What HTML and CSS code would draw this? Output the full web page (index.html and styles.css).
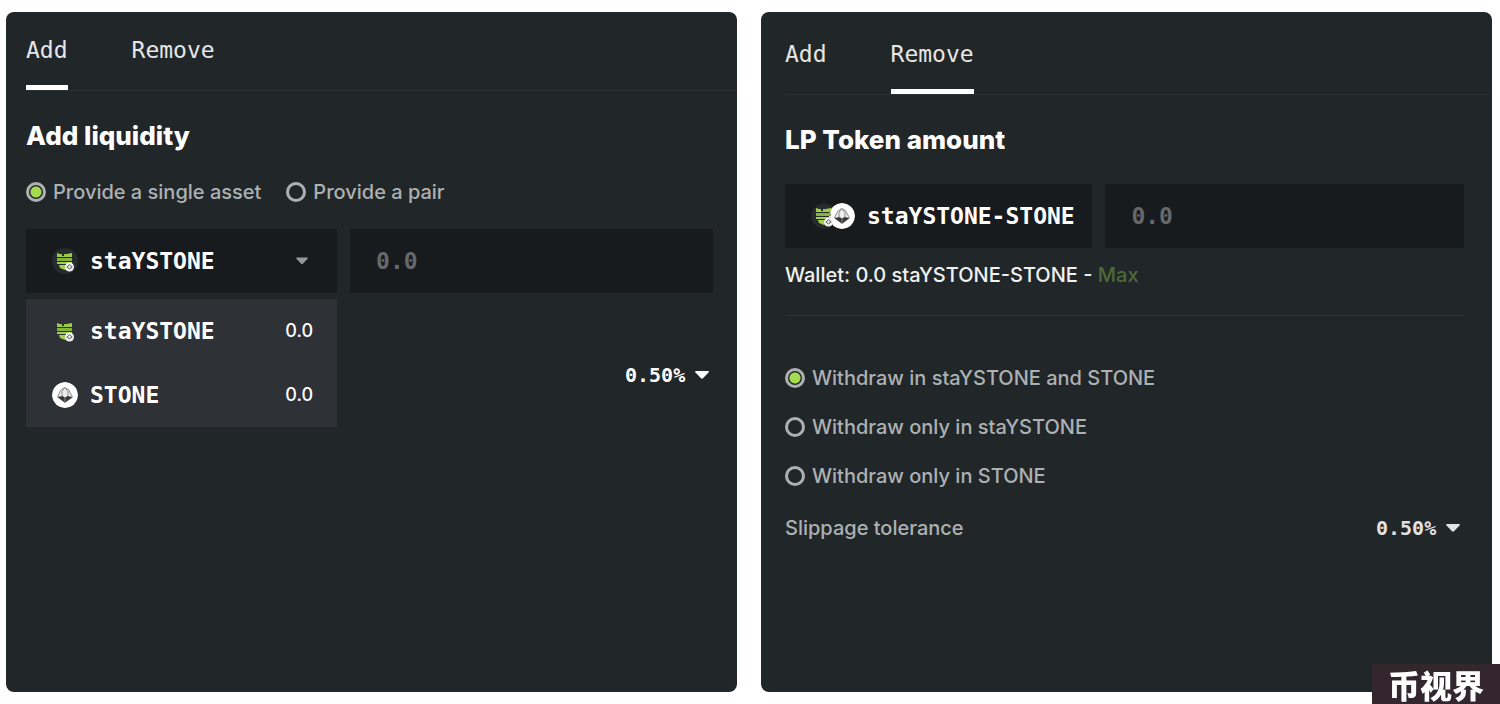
FILE: index.html
```
<!DOCTYPE html>
<html lang="en">
<head>
    <meta charset="UTF-8">
    <meta name="viewport" content="width=device-width, initial-scale=1.0">
    <title>Liquidity</title>
    <link rel="stylesheet" href="styles.css">
</head>
<body>
    <svg class="sprite" aria-hidden="true">
        <symbol id="stone" viewBox="0 0 26 26">
            <circle cx="13" cy="13" r="13" fill="#fff"/>
            <path d="M12.5 5.5L16.5 7.5L20.5 15L13 20.5L5.5 15L8.5 8.5Z" fill="#eee" stroke="#8a8a8a" stroke-width="1"/>
            <path d="M5.5 15L10.5 14L13 15.5L15.5 14L20.5 15L13 20.5Z" fill="#36383a"/>
            <path d="M12.5 5.5L10 9.5V14M12.5 5.5L16 9.5V14M13 15.5V20.5" fill="none" stroke="#8a8a8a" stroke-width="1"/>
        </symbol>
        <symbol id="staystone" viewBox="0 0 26 26">
            <path d="M5 5L8 6H10V8H12V6H15L17 5.5L20 5V9H5Z" fill="#9ccb48"/>
            <path d="M5 10H20V13H5Z" fill="#86b33b"/>
            <path d="M5 14H20V16H5Z" fill="#a3d04f"/>
            <path d="M7 17H19V19L13 22L8 20Z" fill="#a3d04f"/>
            <circle cx="17.5" cy="19" r="4.5" fill="#f4f4f4"/>
            <path d="M14.800 19L17.500 16.500L20.200 19L17.500 21Z" fill="#ddd" stroke="#666" stroke-width="1"/>
        </symbol>
        <symbol id="caret" viewBox="0 0 14 8">
            <path d="M1 0H13Q14.5 0 13.5 1.5L8 7.3Q7 8.2 6 7.3L.5 1.5Q-.5 0 1 0Z" fill="currentColor"/>
        </symbol>
    </svg>

    <main class="panels">
        <section class="panel panel-add">
            <nav class="tabs">
                <a class="tab active" href="#add">Add</a>
                <a class="tab" href="#remove">Remove</a>
            </nav>
            <form class="content">
                <h2 class="title">Add liquidity</h2>
                <div class="modes">
                    <label class="option"><input type="radio" name="mode" checked>Provide a single asset</label>
                    <label class="option"><input type="radio" name="mode">Provide a pair</label>
                </div>
                <div class="fields">
                    <div class="dropdown">
                        <button class="token" type="button" aria-haspopup="listbox" aria-expanded="true">
                            <svg class="coin coin-dark"><use href="#staystone"/></svg>
                            <span>staYSTONE</span>
                            <svg class="caret caret-muted"><use href="#caret"/></svg>
                        </button>
                        <div class="menu">
                            <button class="menu-item" type="button">
                                <svg class="coin"><use href="#staystone"/></svg>
                                <span>staYSTONE</span>
                                <span class="balance">0.0</span>
                            </button>
                            <button class="menu-item" type="button">
                                <svg class="coin"><use href="#stone"/></svg>
                                <span>STONE</span>
                                <span class="balance">0.0</span>
                            </button>
                        </div>
                    </div>
                    <input class="amount" type="text" placeholder="0.0" aria-label="Amount">
                </div>
                <div class="slippage">
                    <div class="percent">
                        <select aria-label="Slippage tolerance"><option>0.50%</option></select>
                        <svg class="caret"><use href="#caret"/></svg>
                    </div>
                </div>
            </form>
        </section>

        <section class="panel panel-remove">
            <nav class="tabs">
                <a class="tab" href="#add">Add</a>
                <a class="tab active" href="#remove">Remove</a>
            </nav>
            <form class="content">
                <h2 class="title">LP Token amount</h2>
                <div class="fields">
                    <div class="token">
                        <span class="pair">
                            <svg class="coin"><use href="#staystone"/></svg>
                            <svg class="coin"><use href="#stone"/></svg>
                        </span>
                        <span>staYSTONE-STONE</span>
                    </div>
                    <input class="amount" type="text" placeholder="0.0" aria-label="LP token amount">
                </div>
                <p class="wallet">Wallet: 0.0 staYSTONE-STONE - <button class="max" type="button">Max</button></p>
                <hr class="divider">
                <div class="withdraw">
                    <label class="option"><input type="radio" name="withdraw" checked>Withdraw in staYSTONE and STONE</label>
                    <label class="option"><input type="radio" name="withdraw">Withdraw only in staYSTONE</label>
                    <label class="option"><input type="radio" name="withdraw">Withdraw only in STONE</label>
                </div>
                <div class="slippage">
                    <label for="slippage">Slippage tolerance</label>
                    <div class="percent">
                        <select id="slippage"><option>0.50%</option></select>
                        <svg class="caret"><use href="#caret"/></svg>
                    </div>
                </div>
            </form>
        </section>
    </main>

    <div class="badge" lang="zh">币视界</div>
</body>
</html>
```
FILE: styles.css
```
* {
    box-sizing: border-box;
}
body {
    margin: 0;
    background: #fff;
    color: #adb1b3;
    font: 500 20px/24px Inter, sans-serif;
}
button, input, select {
    margin: 0;
    padding: 0;
    border: 0;
    border-radius: 0;
    background: transparent;
    color: inherit;
    font: inherit;
}
.sprite {
    display: none;
}

.panels {
    display: grid;
    grid-template-columns: 1fr 1fr;
    gap: 24px;
    min-height: 100vh;
    padding: 12px 8px 12px 6px;
}
.panel {
    background: #212629;
    border-radius: 8px;
}
.panel-add {
    padding: 24px 0 24px 20px;
}
.panel-remove {
    padding: 28px 0 24px 24px;
}
.content {
    padding-right: 24px;
}
.panel-remove .content {
    padding-right: 28px;
}

.tabs {
    display: flex;
    gap: 64px;
    border-bottom: 1px solid #2b2f33;
}
.tab {
    padding-bottom: 21px;
    border-bottom: 5px solid transparent;
    color: #e6e6e6;
    font: 23px/28px "DejaVu Sans Mono", monospace;
    text-decoration: none;
}
.tab.active {
    border-color: #fff;
}

.title {
    margin: 29px 0 28px;
    color: #fff;
    font-size: 26px;
    font-weight: 800;
    line-height: 32px;
}
.modes {
    display: flex;
    gap: 25px;
    margin-bottom: 25px;
}
.option {
    display: flex;
    align-items: center;
    gap: 7px;
}
.option input {
    appearance: none;
    width: 20px;
    height: 20px;
    border: 3px solid #adb1b3;
    border-radius: 50%;
}
.option input:checked {
    background: radial-gradient(circle, #a5dc4f 5px, transparent 6px);
}

.fields {
    display: grid;
    grid-template-columns: 6fr 7fr;
    gap: 13px;
}
.dropdown {
    position: relative;
}
.token, .menu-item {
    display: flex;
    align-items: center;
    gap: 12px;
    width: 100%;
    height: 64px;
    padding: 0 24px 0 26px;
    color: #fff;
    font: bold 23px/28px "DejaVu Sans Mono", monospace;
    white-space: nowrap;
}
.panel-remove .token {
    padding-right: 0;
}
.token, .amount {
    background: #181b1d;
}
.amount {
    min-width: 0;
    height: 64px;
    padding: 0 26px;
    font: bold 23px/28px "DejaVu Sans Mono", monospace;
}
.amount::placeholder {
    color: #66696b;
}
.menu {
    position: absolute;
    top: 70px;
    width: 100%;
    background: #2e3135;
}
.balance {
    margin-left: auto;
    font: 500 18px/24px Inter, sans-serif;
}
.coin {
    flex: none;
    width: 26px;
    height: 26px;
    border-radius: 50%;
}
.coin-dark {
    background: #262b2d;
}
.pair {
    display: flex;
    background: radial-gradient(circle at 13px, #262b2d 12px, transparent 13px);
}
.pair .coin:first-child {
    z-index: 1;
}
.pair .coin + .coin {
    margin-left: -8px;
}
.caret {
    flex: none;
    width: 14px;
    height: 8px;
    color: #fff;
}
.caret-muted {
    width: 12px;
    margin: 0 5px 0 auto;
    color: #96999b;
}

.wallet {
    margin: 15px 0 28px;
    color: #f0f1f1;
}
.max {
    color: #4d6936;
}
.divider {
    margin: 0;
    border: 0;
    border-top: 1px solid #303438;
}
.withdraw {
    display: flex;
    flex-direction: column;
    gap: 25px;
    margin-top: 50px;
}
.slippage {
    display: flex;
    justify-content: space-between;
    margin-top: 28px;
}
.panel-add .slippage {
    justify-content: flex-end;
    margin-top: 70px;
}
.percent {
    display: flex;
    align-items: center;
    gap: 9px;
    padding-right: 4px;
    color: #fff;
}
.percent select {
    appearance: none;
    font: bold 20px/24px "DejaVu Sans Mono", monospace;
}
.panel-remove .percent, .panel-remove .percent .caret {
    color: #e2e2e2;
}

.badge {
    position: fixed;
    right: 0;
    bottom: 0;
    padding: 0 16px;
    background: #33272d;
    color: #fff;
    font: 900 32px/40px "Noto Sans CJK SC", sans-serif;
}
```
